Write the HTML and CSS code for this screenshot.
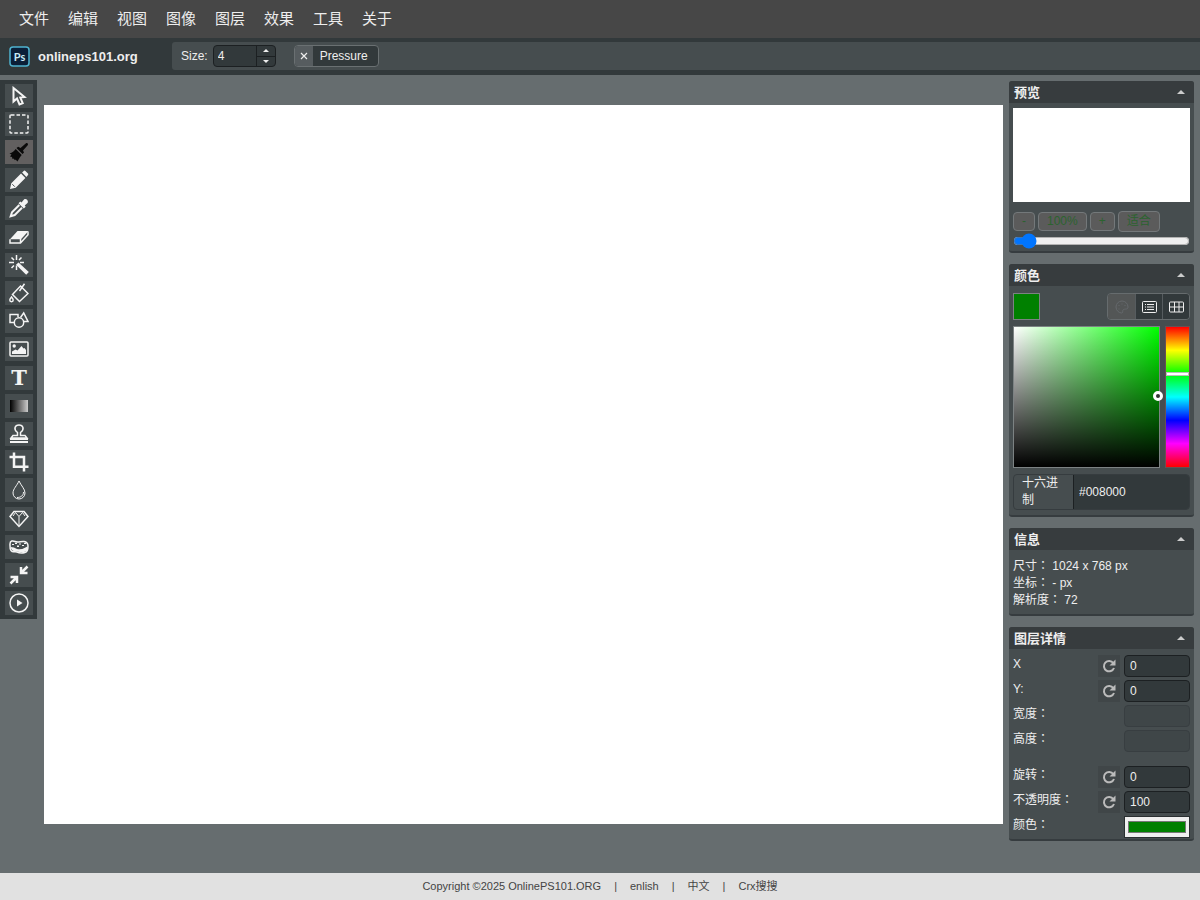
FILE: index.html
```html
<!DOCTYPE html>
<html lang="en">
<head>
    <meta charset="UTF-8">
    <meta name="viewport" content="width=device-width, initial-scale=1">
    <title>onlineps101.org</title>
    <link rel="stylesheet" href="styles.css">
</head>
<body>
    <!-- 主菜单 -->
    <nav class="menu">
        <a href="#">文件</a>
        <a href="#">编辑</a>
        <a href="#">视图</a>
        <a href="#">图像</a>
        <a href="#">图层</a>
        <a href="#">效果</a>
        <a href="#">工具</a>
        <a href="#">关于</a>
    </nav>

    <!-- 工具属性栏 -->
    <header class="submenu">
        <a class="logo" href="#">
            <svg width="21" height="21" viewBox="0 0 21 21">
                <rect x="1" y="1" width="19" height="19" rx="3" fill="#0b1f38" stroke="#4fb3d0" stroke-width="1.5"/>
                <text class="logo-mark" x="10.500" y="15" text-anchor="middle">Ps</text>
            </svg>
            <span>onlineps101.org</span>
        </a>
        <div class="attributes">
            <label for="size">Size:</label>
            <div class="stepper">
                <input type="text" id="size" value="4">
                <div class="stepper-buttons">
                    <button type="button" aria-label="增加"><svg width="6" height="3" viewBox="0 0 6 3"><path d="M0 3L3 0L6 3Z"/></svg></button>
                    <button type="button" aria-label="减少"><svg width="6" height="3" viewBox="0 0 6 3"><path d="M0 0L3 3L6 0Z"/></svg></button>
                </div>
            </div>
            <button type="button" class="toggle">
                <span class="toggle-mark"><svg width="8" height="8" viewBox="0 0 8 8"><path d="M1 1L7 7M7 1L1 7" stroke="#eee" stroke-width="1.2"/></svg></span>
                <span class="toggle-text">Pressure</span>
            </button>
        </div>
    </header>

    <main class="wrapper">
        <!-- 左侧工具 -->
        <aside class="tools">
            <div class="tool-group">
                <button type="button" aria-label="选择"><svg viewBox="0 0 20 20"><path class="line" d="M4.500 2V15.500L8 12.500L10.500 18.500L13.700 17.200L11.300 11.500L15.500 11Z"/></svg></button>
                <button type="button" aria-label="选区"><svg viewBox="0 0 20 20"><rect class="line thin" x="1" y="1" width="18" height="18" rx="1" stroke-dasharray="3.500 2"/></svg></button>
                <button type="button" class="active" aria-label="画笔"><svg viewBox="0 0 20 20"><path d="M17 1.200C18.500 .6 19.600 2 18.700 3.300L14 8.500L15 10.500L13.500 12L7.500 6L9.200 4.800L11.500 6Z"/><path d="M6.700 7L12.700 13C10.500 15.500 10 17 8.500 19.500L6.500 17.500L6 18.200L4.500 16.500L3.500 17L3 15L1 14.500L2.500 12.500L.5 11.500C3.500 10.500 5 9 6.700 7Z"/></svg></button>
                <button type="button" aria-label="铅笔"><svg viewBox="0 0 20 20"><path d="M1 19L2.300 13.300L12 3.600L16.400 8L6.700 17.700ZM13.100 2.500L15 .8Q15.700 .3 16.400 1L19 3.600Q19.600 4.300 19 5L17.400 6.900Z"/><path d="M3.300 14.200L5.800 16.700" stroke="#464d50"/></svg></button>
                <button type="button" aria-label="吸管"><svg viewBox="0 0 20 20"><path d="M12.500 4.500L15 1.500C17 -.2 20 2.600 18.500 5L15.700 7.600L16.700 8.700L14.800 10.500L9.500 5.200L11.300 3.400Z"/><path class="line" d="M10.300 7L3 14.300L1.700 18.300L5.700 17L13 9.700"/></svg></button>
            </div>
            <div class="tool-group">
                <button type="button" aria-label="橡皮擦"><svg viewBox="0 0 20 20"><path d="M8.500 4H19.500L12 12.200H1Z"/><path class="line thin" d="M1 12.300V16H11.500L19 7.700V4.500M11.500 12V16"/></svg></button>
                <button type="button" aria-label="魔棒"><svg viewBox="0 0 20 20"><path class="line thin" d="M7.500 0V5M2.500 2.500L5 5M0 7.500H5M2.500 13L5 10.500M7.500 10.500V15M12.500 2.500L10 5M11 7.500H15"/><path d="M9.500 7.500L19.800 17L17.200 19.800L7 9.800Z"/></svg></button>
                <button type="button" aria-label="填充"><svg viewBox="0 0 20 20"><path class="line thin" d="M11.500 3L19 10.500L10.500 18.500L3.500 11.500ZM10.500 8L15.500 .8"/><path class="line thin" d="M2.500 14C1.200 15.500 .8 16.200 .8 17A1.700 1.700 0 0 0 4.200 17C4.200 16.200 3.800 15.500 2.500 14Z"/></svg></button>
                <button type="button" aria-label="形状"><svg viewBox="0 0 20 20"><path class="line thin" d="M5 11.500H1V3.500H9V6M11.500 6.500L14.700 2L19 10.500H14.500"/><circle class="line thin" cx="10" cy="11.500" r="4.700"/></svg></button>
                <button type="button" aria-label="图片"><svg viewBox="0 0 20 20"><rect class="line thin" x="1" y="3" width="18" height="14" rx="1"/><circle cx="5.200" cy="7" r="1.700"/><path d="M3 15V12.500L6.500 10.500L8.500 11.500L12.500 7L14.500 9.500L15.500 9L17 11V15Z"/></svg></button>
            </div>
            <div class="tool-group">
                <button type="button" aria-label="文字"><svg viewBox="0 0 20 20"><text class="glyph" x="10" y="17" text-anchor="middle">T</text></svg></button>
                <button type="button" aria-label="渐变"><span class="gradient-icon"></span></button>
                <button type="button" aria-label="图章"><svg viewBox="0 0 20 20"><path class="line thin" d="M8.500 8.500C4 5 6 1 10 1S16 5 11.500 8.500V11.500H16L18 14H2L4 11.500H8.500Z"/><path d="M1 14H19V16H1ZM1 17H19V19H1Z"/></svg></button>
                <button type="button" aria-label="裁剪"><svg viewBox="0 0 20 20"><path class="line bold" d="M5 .5V14.700H19.500M.5 5H15V19.500"/></svg></button>
                <button type="button" aria-label="模糊"><svg viewBox="0 0 20 20"><path class="line hair" d="M10 1C8 5.500 4 9 4 13A6 6 0 0 0 16 13C16 9 12 5.500 10 1Z"/><path class="line hair" d="M14.500 12C14.500 15.500 12 17.500 8 17.500"/></svg></button>
            </div>
            <div class="tool-group">
                <button type="button" aria-label="锐化"><svg viewBox="0 0 20 20"><path class="line thin" d="M5 2.500H15L19 7.500L10 17.500L1 7.500Z"/><path class="line hair" d="M4 7L6.500 3.500L10 7.500L13.500 3.500L16 7M10 7.500V17"/></svg></button>
                <button type="button" aria-label="海绵"><svg viewBox="0 0 20 20"><path class="line thin" d="M1 7C1 3.500 4 3.500 6 4.500C9 6 12 4 15 4.500C18 5 19 6 19 9C19 12 19 15 16 15.500C12 16.500 10 16 8 15C5 14 4 16 2 13.500C.7 12 1 9 1 7Z"/><path d="M1.500 10Q5 10 8 12Q13 13 18.500 9.500Q19.500 13 17 14.500Q13 16 8 14.500Q3 15 1.500 10Z"/><path d="M3 7H5V8H3ZM6 6H8V7H6ZM8 8.500H10V10H8ZM10 6.500H12V7.500H10ZM13 8H15V9H13ZM15 6H17V7H15Z"/></svg></button>
                <button type="button" aria-label="缩小"><svg viewBox="0 0 20 20"><path class="line bold" d="M18.500 1.500L13 7M12 2V8H18.500M1.500 18.500L7 13M1.500 12H8V18"/></svg></button>
                <button type="button" aria-label="播放"><svg viewBox="0 0 20 20"><circle class="line thin" cx="10" cy="10" r="9"/><path d="M8 6.500L13.500 10L8 13.500Z"/></svg></button>
            </div>
        </aside>

        <section class="stage">
            <canvas class="paper"></canvas>
        </section>

        <!-- 右侧面板 -->
        <aside class="sidebar">
            <section class="block">
                <h2>预览</h2>
                <div class="block-content navigator">
                    <div class="preview"></div>
                    <div class="zoom-buttons">
                        <button type="button">-</button>
                        <button type="button">100%</button>
                        <button type="button">+</button>
                        <button type="button" class="fit">适合</button>
                    </div>
                    <input type="range" class="zoom-range" min="0" max="100" value="5" aria-label="缩放">
                </div>
            </section>

            <section class="block">
                <h2>颜色</h2>
                <div class="block-content">
                    <div class="color-top">
                        <div class="swatch"></div>
                        <div class="color-modes">
                            <button type="button" class="off" aria-label="调色板"><svg width="14" height="14" viewBox="0 0 14 14"><path d="M7 1A6 6 0 0 0 1 7C1 10.500 4 13 6.500 13C8.500 13 7 10.500 8.500 9.500C10 8.500 13 10 13 7A6 6 0 0 0 7 1Z"/><path d="M4 5V6M7 3.500V4.500M10 5V6M4 8.500V9.500"/></svg></button>
                            <button type="button" aria-label="数值"><svg width="15" height="12" viewBox="0 0 15 12"><rect x=".5" y=".5" width="14" height="11" rx="1"/><path d="M3 3.500H4M5 3.500H12M3 6H4M5 6H12M3 8.500H4M5 8.500H12"/></svg></button>
                            <button type="button" aria-label="色板"><svg width="15" height="12" viewBox="0 0 15 12"><rect x=".5" y="1" width="14" height="10" rx="1"/><path d="M5.500 1V11M10 1V11M.5 6H14.500"/></svg></button>
                        </div>
                    </div>
                    <div class="picker">
                        <div class="picker-area"><span class="picker-handle"></span></div>
                        <div class="picker-hue"><span class="hue-handle"></span></div>
                    </div>
                    <div class="hex">
                        <label for="hex">十六进制</label>
                        <input type="text" id="hex" value="#008000">
                    </div>
                </div>
            </section>

            <section class="block">
                <h2>信息</h2>
                <div class="block-content info">
                    <div><span>尺寸：</span> 1024 x 768 px</div>
                    <div><span>坐标：</span> - px</div>
                    <div><span>解析度：</span> 72</div>
                </div>
            </section>

            <section class="block">
                <h2>图层详情</h2>
                <div class="block-content details">
                    <div class="row">
                        <label for="pos-x">X</label>
                        <button type="button" class="reset" aria-label="重置"><svg viewBox="0 0 14 14"><path class="arc" d="M11.300 4A5.200 5.200 0 1 0 12 9"/><path d="M13.500 .5V6.500H7.500Z"/></svg></button>
                        <input type="text" id="pos-x" value="0">
                    </div>
                    <div class="row">
                        <label for="pos-y">Y:</label>
                        <button type="button" class="reset" aria-label="重置"><svg viewBox="0 0 14 14"><path class="arc" d="M11.300 4A5.200 5.200 0 1 0 12 9"/><path d="M13.500 .5V6.500H7.500Z"/></svg></button>
                        <input type="text" id="pos-y" value="0">
                    </div>
                    <div class="row">
                        <label for="width">宽度：</label>
                        <input type="text" id="width" disabled>
                    </div>
                    <div class="row">
                        <label for="height">高度：</label>
                        <input type="text" id="height" disabled>
                    </div>
                    <div class="row spaced">
                        <label for="rotate">旋转：</label>
                        <button type="button" class="reset" aria-label="重置"><svg viewBox="0 0 14 14"><path class="arc" d="M11.300 4A5.200 5.200 0 1 0 12 9"/><path d="M13.500 .5V6.500H7.500Z"/></svg></button>
                        <input type="text" id="rotate" value="0">
                    </div>
                    <div class="row">
                        <label for="opacity">不透明度：</label>
                        <button type="button" class="reset" aria-label="重置"><svg viewBox="0 0 14 14"><path class="arc" d="M11.300 4A5.200 5.200 0 1 0 12 9"/><path d="M13.500 .5V6.500H7.500Z"/></svg></button>
                        <input type="text" id="opacity" value="100">
                    </div>
                    <div class="row">
                        <label for="layer-color">颜色：</label>
                        <input type="color" id="layer-color" value="#008000">
                    </div>
                </div>
            </section>
        </aside>
    </main>

    <footer class="footer">
        <span>Copyright ©2025 OnlinePS101.ORG</span>
        <span>|</span>
        <a href="#">enlish</a>
        <span>|</span>
        <a href="#">中文</a>
        <span>|</span>
        <a href="#">Crx搜搜</a>
    </footer>
</body>
</html>
```
FILE: styles.css
```css
* {
    box-sizing: border-box;
}

body {
    margin: 0;
    min-height: 100vh;
    display: flex;
    flex-direction: column;
    background: #666d6f;
    color: #eee;
    font-family: "Liberation Sans", "Noto Sans CJK SC", sans-serif;
    font-size: 12px;
    line-height: 17px;
}

a {
    color: inherit;
    text-decoration: none;
}

button, input {
    font: inherit;
    color: inherit;
    margin: 0;
    padding: 0;
}

svg {
    display: block;
}

/* 主菜单 */
.menu {
    display: flex;
    align-items: center;
    gap: 19px;
    height: 38px;
    padding: 0 19px 2px;
    background: #474747;
    font-size: 15px;
}

/* 属性栏 */
.submenu {
    display: flex;
    height: 37px;
    padding: 4px 0 5px;
    background: #32393b;
}

.logo {
    display: flex;
    align-items: center;
    gap: 8px;
    width: 172px;
    padding-left: 9px;
    font-size: 13px;
    font-weight: bold;
}

.logo-mark {
    fill: #c9e9f7;
    font: bold 11px Lato, sans-serif;
}

.attributes {
    flex: 1;
    display: flex;
    align-items: center;
    padding-left: 9px;
    background: #464d4f;
    border-radius: 3px 0 0 3px;
}

.stepper {
    display: flex;
    width: 63px;
    height: 22px;
    margin: 0 18px 0 5px;
    border: 1px solid #1c2022;
    border-radius: 4px;
    background: #32393b;
    overflow: hidden;
}

.stepper input {
    flex: 1;
    min-width: 0;
    padding-left: 4px;
    border: 0;
    background: none;
}

.stepper-buttons {
    display: flex;
    flex-direction: column;
    width: 19px;
    border-left: 1px solid #1c2022;
}

.stepper-buttons button {
    flex: 1;
    display: flex;
    align-items: center;
    justify-content: center;
    border: 0;
    background: none;
}

.stepper-buttons button + button {
    border-top: 1px solid #1c2022;
}

.stepper-buttons svg {
    fill: #eee;
}

.toggle {
    display: flex;
    height: 22px;
    border: 1px solid #6a7072;
    border-radius: 4px;
    background: #32393b;
    overflow: hidden;
}

.toggle-mark {
    display: flex;
    align-items: center;
    justify-content: center;
    width: 18px;
    height: 20px;
    background: #565c5f;
}

.toggle-text {
    padding: 2px 10px 0 7px;
}

/* 工作区 */
.wrapper {
    flex: 1;
    display: flex;
    align-items: flex-start;
    padding: 5px 6px 0 0;
}

.tools {
    display: flex;
    flex-direction: column;
    gap: 5px;
    padding: 4px 4px 4px 5px;
    background: #32393b;
}

.tool-group {
    display: flex;
    flex-direction: column;
    gap: 4px;
}

.tools button {
    display: flex;
    align-items: center;
    justify-content: center;
    width: 28px;
    height: 24px;
    border: 0;
    background: #464d4f;
}

.tools .active {
    background: #626060;
}

.tools svg {
    width: 20px;
    height: 20px;
    fill: #f4f4f4;
}

.tools .active svg {
    fill: #0a0a0a;
}

.tools .line {
    fill: none;
    stroke: #f4f4f4;
    stroke-width: 2;
}

.tools .thin {
    stroke-width: 1.5;
}

.tools .hair {
    stroke-width: 1;
}

.tools .bold {
    stroke-width: 2.5;
}

.glyph {
    font: bold 21px "DejaVu Serif", serif;
}

.gradient-icon {
    width: 18px;
    height: 12px;
    background: linear-gradient(to right, #000, #ccc);
}

.stage {
    flex: 1;
    padding: 25px 6px 0 7px;
}

.paper {
    display: block;
    width: 100%;
    aspect-ratio: 4 / 3;
    background: #fff;
}

/* 右侧面板 */
.sidebar {
    display: flex;
    flex-direction: column;
    gap: 11px;
    width: 185px;
    padding-top: 1px;
}

.block {
    background: #464d4f;
    border-bottom: 2px solid #363c3f;
    border-radius: 3px;
}

.block h2 {
    display: flex;
    align-items: center;
    justify-content: space-between;
    height: 22px;
    margin: 0;
    padding: 0 9px 0 5px;
    background: #373c3e;
    border-radius: 3px 3px 0 0;
    font-size: 13px;
}

.block h2::after {
    content: "";
    border: 4px solid transparent;
    border-top: 0;
    border-bottom-color: #ccc;
}

.block-content {
    padding: 5px 4px;
}

.navigator {
    padding-bottom: 2px;
}

.preview {
    height: 94px;
    background: #fff;
}

.zoom-buttons {
    display: flex;
    align-items: center;
    gap: 3px;
    margin-top: 9px;
}

.zoom-buttons button {
    height: 19px;
    padding: 0 8px;
    border: 1px solid #73787a;
    border-radius: 4px;
    background: #5b5b5b;
    color: #2c632f;
}

.zoom-buttons .fit {
    height: 21px;
}

.zoom-range {
    display: block;
    width: 100%;
    height: 16px;
    margin-top: 1px;
}

.color-top {
    display: flex;
    justify-content: space-between;
    margin-top: 2px;
}

.swatch {
    width: 27px;
    height: 27px;
    border: 1px solid #7c8283;
    background: #008000;
}

.color-modes {
    display: flex;
    border: 1px solid #666c6e;
    border-radius: 4px;
    overflow: hidden;
}

.color-modes button {
    display: flex;
    align-items: center;
    justify-content: center;
    width: 27px;
    height: 25px;
    border: 0;
    background: #32393b;
}

.color-modes button + button {
    border-left: 1px solid #565c5f;
}

.color-modes .off {
    background: #535656;
}

.color-modes svg {
    fill: none;
    stroke: #eee;
}

.color-modes .off svg {
    stroke: #65696c;
}

.picker {
    display: flex;
    gap: 5px;
    height: 142px;
    margin-top: 6px;
}

.picker-area {
    position: relative;
    flex: 1;
    border: 1px solid #7c8283;
    background: linear-gradient(to top, #000, transparent), linear-gradient(to right, #fff, #0f0);
}

.picker-handle {
    position: absolute;
    right: -4px;
    top: 49%;
    width: 10px;
    height: 10px;
    transform: translateY(-50%);
    border: 3px solid #fff;
    border-radius: 50%;
    background: #333;
}

.picker-hue {
    position: relative;
    width: 25px;
    border: 1px solid #6a5052;
    background: linear-gradient(to bottom, #f00, #ff0, #0f0, #0ff, #00f, #f0f, #f00);
}

.hue-handle {
    position: absolute;
    left: 0;
    right: 0;
    top: 32%;
    height: 4px;
    border: 1px solid #bbb;
    background: #fff;
}

.hex {
    display: flex;
    margin-top: 6px;
    border: 1px solid #363c3f;
    border-radius: 4px;
    overflow: hidden;
}

.hex label {
    width: 59px;
    padding: 0 8px;
}

.hex input {
    flex: 1;
    min-width: 0;
    padding-left: 5px;
    border: 0;
    border-left: 1px solid #1c2022;
    background: #32393b;
}

.info {
    padding: 8px 4px 5px;
}

/* 全角冒号居中显示 */
.info span, .row label {
    font-family: "Liberation Sans", "Noto Sans CJK JP", sans-serif;
}

.details {
    padding: 6px 4px 1px;
}

.row {
    display: flex;
    gap: 4px;
    height: 22px;
    margin-bottom: 3px;
}

.row:last-child {
    margin-bottom: 0;
}

.row.spaced {
    margin-top: 14px;
}

.row label {
    flex: 1;
    padding-top: 1px;
}

.row input {
    width: 66px;
    padding-left: 5px;
    border: 1px solid #1c2022;
    border-radius: 4px;
    background: #32393b;
}

.row input:disabled {
    border-color: #383e41;
    background: #3f4648;
}

.reset {
    display: flex;
    align-items: center;
    justify-content: center;
    width: 22px;
    border: 0;
    background: #404648;
}

.reset svg {
    width: 14px;
    height: 14px;
    fill: #bbb;
}

.reset .arc {
    fill: none;
    stroke: #bbb;
    stroke-width: 2;
}

.row input[type="color"] {
    height: 22px;
    padding: 4px 3px;
    border: 1px solid #2a2f31;
    border-radius: 0;
    background: #efefef;
}

.row input[type="color"]::-webkit-color-swatch-wrapper {
    padding: 0;
}

.row input[type="color"]::-webkit-color-swatch {
    border: 1px solid #777;
    border-radius: 0;
}

/* 页脚 */
.footer {
    display: flex;
    align-items: center;
    justify-content: center;
    gap: 13px;
    height: 27px;
    background: #e1e1e1;
    color: #444;
    font-size: 11px;
}
```
